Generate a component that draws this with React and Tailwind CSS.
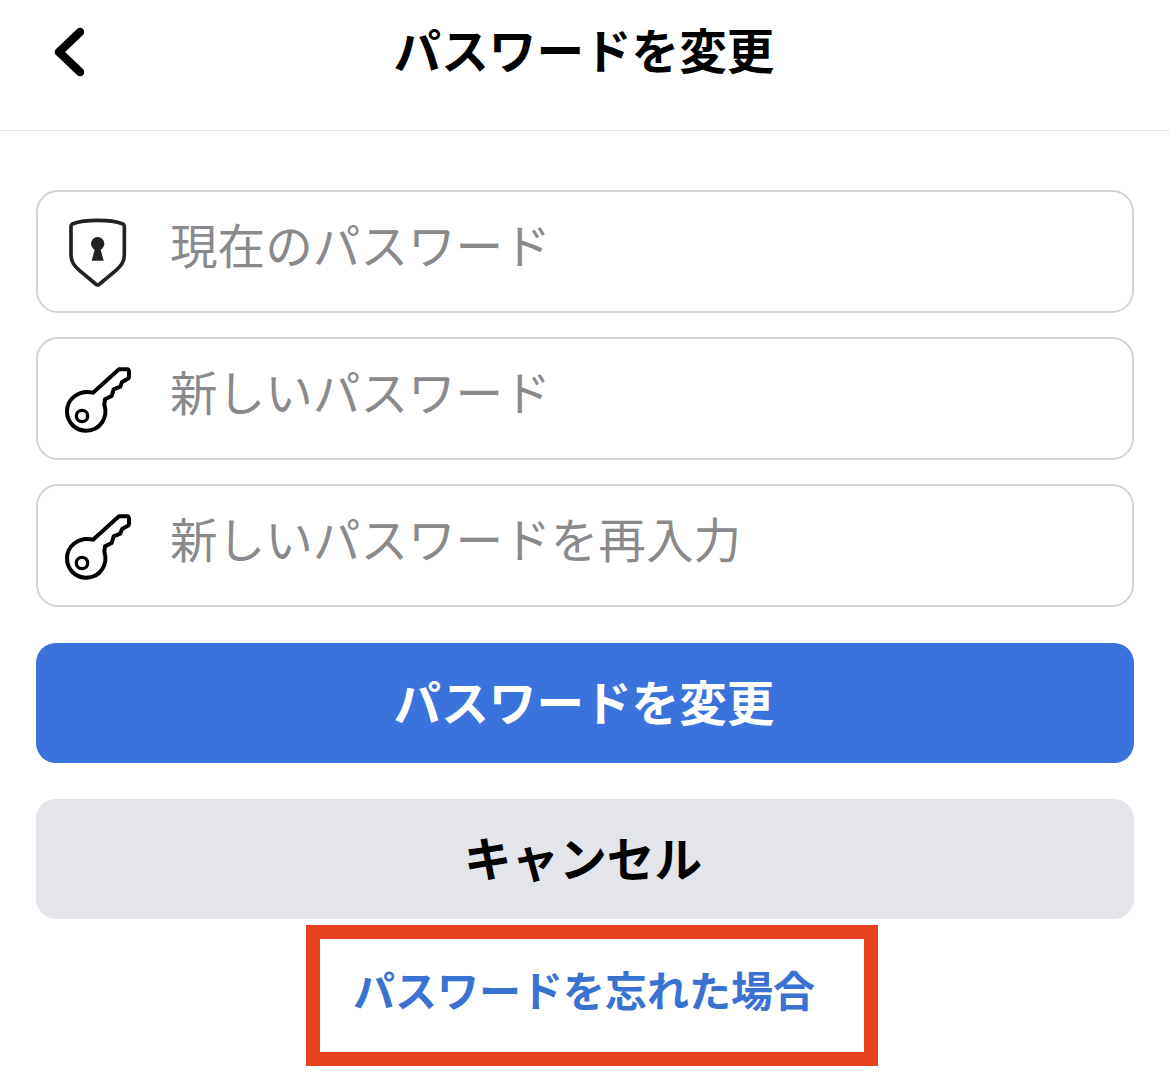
const FONT = "font-['Inter','Noto_Sans_CJK_JP',sans-serif]";

function ShieldIcon() {
  return (
    <svg viewBox="100 100 210 230" className="w-[70px] h-[76.67px] shrink-0 ml-[-1px] mt-[2px]" fill="none">
      <path d="M204 119C172 119 146 123 130 129C126 131 124 134 124 138V222C124 244 134 256 150 270L198 310C202 314 206 314 210 310L258 270C274 256 284 244 284 222V138C284 134 282 131 278 129C262 123 236 119 204 119Z" stroke="#222" strokeWidth="11" strokeLinejoin="round" />
      <circle cx="204" cy="189" r="20" fill="#222" />
      <path d="M197 200L186 240H222L211 200Z" fill="#222" />
    </svg>
  );
}

function KeyIcon() {
  return (
    <svg viewBox="100 70 210 210" className="w-[70px] h-[70px] shrink-0 ml-[-1px]" fill="none">
      <path d="M190 156L268 86H292C296 86 298 90 298 94V108C298 112 296 114 292 116L277 124L272 138L252 146L246 166L226 176L224 192C236 230 212 270 170 270C136 270 112 244 112 212C112 176 146 146 190 156Z" stroke="#000" strokeWidth="12" strokeLinejoin="round" />
      <circle cx="157" cy="226" r="17" stroke="#000" strokeWidth="10" />
    </svg>
  );
}

function Field({ icon, label, top }) {
  return (
    <div className={`flex items-center h-[123px] rounded-[22px] border-2 border-[#d4d4d6] bg-white pl-[26px] ${top}`}>
      <div className="w-[106px] flex items-center">{icon}</div>
      <span className="text-[47.6px] leading-none text-[#8a8a8c] -mt-[9px]">{label}</span>
    </div>
  );
}

export default function App() {
  return (
    <div className={`${FONT} w-[1170px] h-[1075px] bg-white overflow-hidden text-black`}>
      {/* header */}
      <div className="relative flex items-center justify-center h-[131px] border-b border-[#e4e4e6] pb-[27px] pr-[2px]">
        <svg viewBox="0 0 40 60" className="absolute left-[50px] top-[22px] w-[40px] h-[60px]" fill="none">
          <path d="M30 10L9 30L30 50" stroke="#000" strokeWidth="8.5" strokeLinecap="round" strokeLinejoin="round" />
        </svg>
        <h1 className="text-[47.6px] leading-none font-semibold">パスワードを変更</h1>
      </div>

      <div className="px-[36px] pt-[59px]">
        <Field icon={<ShieldIcon />} label="現在のパスワード" />
        <Field icon={<KeyIcon />} label="新しいパスワード" top="mt-[24px]" />
        <Field icon={<KeyIcon />} label="新しいパスワードを再入力" top="mt-[24px]" />

        <button className="block w-full h-[120px] mt-[36px] rounded-[20px] bg-[#3b73dd] text-white text-[47.6px] leading-none font-semibold pr-[2px] pt-[2px]">
          パスワードを変更
        </button>
        <button className="block w-full h-[120px] mt-[36px] rounded-[20px] bg-[#e4e5ea] text-black text-[47.6px] leading-none font-semibold pr-[4px] pt-[2px]">
          キャンセル
        </button>

        <div className="flex justify-center mt-[6px]">
          <a className="flex items-center justify-center w-[572px] h-[141px] ml-[14px] border-[14px] border-[#e84320] bg-white text-[#3a72d2] text-[42px] leading-none font-semibold pb-[8px] pr-[16px]">
            パスワードを忘れた場合
          </a>
        </div>
      </div>
    </div>
  );
}
